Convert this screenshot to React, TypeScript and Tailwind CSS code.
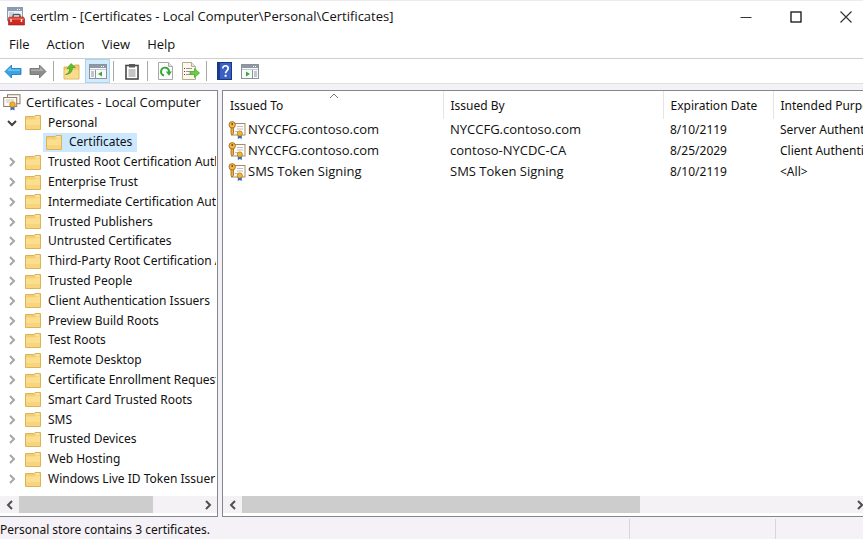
import React from 'react';

const stores = [
  'Trusted Root Certification Authorities',
  'Enterprise Trust',
  'Intermediate Certification Authorities',
  'Trusted Publishers',
  'Untrusted Certificates',
  'Third-Party Root Certification Authorities',
  'Trusted People',
  'Client Authentication Issuers',
  'Preview Build Roots',
  'Test Roots',
  'Remote Desktop',
  'Certificate Enrollment Requests',
  'Smart Card Trusted Roots',
  'SMS',
  'Trusted Devices',
  'Web Hosting',
  'Windows Live ID Token Issuer',
];

const certificates = [
  { to: 'NYCCFG.contoso.com', by: 'NYCCFG.contoso.com', expires: '8/10/2119', purpose: 'Server Authentication' },
  { to: 'NYCCFG.contoso.com', by: 'contoso-NYCDC-CA', expires: '8/25/2029', purpose: 'Client Authentication' },
  { to: 'SMS Token Signing', by: 'SMS Token Signing', expires: '8/10/2119', purpose: '<All>' },
];

function AppIcon() {
  return (
    <svg width="18" height="19" viewBox="0 0 18 19" className="shrink-0">
      <rect x="0.5" y="0.5" width="15" height="13" fill="#eef2f6" stroke="#8d9bad" />
      <rect x="1" y="1" width="14" height="3" fill="#8b9db5" />
      <path d="M10 2.500h1M12 2.500h1" stroke="#fff" />
      <path d="M2 6h5M2 8h3" stroke="#a9b4c2" />
      <path d="M6 10V8.500Q6 7.500 7 7.500h5q1 0 1 1V10" fill="none" stroke="#55585f" strokeWidth="1.500" />
      <path d="M2 10h14.500l1 2v6H1.500v-6z" fill="#cf2a22" stroke="#8f1712" strokeWidth="0.600" />
      <path d="M2 10.500h14.500l0.700 2.500H1.800z" fill="#e5584c" />
      <path d="M4 12v3M14.500 12v3" stroke="#f5e6e0" strokeWidth="1.500" />
    </svg>
  );
}

function ArrowIcon({ fill, stroke, flip }: { fill: string; stroke: string; flip?: boolean }) {
  return (
    <svg width="18" height="16" viewBox="0 0 18 16">
      <path
        d={flip ? 'M17 8.500L10.500 2V5.500H1v6h9.500V15z' : 'M1 8.500L7.500 2V5.500H17v6H7.500V15z'}
        fill={fill}
        stroke={stroke}
        strokeWidth="0.800"
        strokeLinejoin="round"
      />
      <path d={flip ? 'M2 6.500h9V4l4 4H2z' : 'M16 6.500H7V4L3 8h13z'} fill="#fff" opacity="0.300" />
    </svg>
  );
}

function UpFolderIcon() {
  return (
    <svg width="17" height="18" viewBox="0 0 17 18">
      <path d="M1 5h9l1.500-2H16v14H1z" fill="#f4cf73" stroke="#d5a640" strokeWidth="0.800" />
      <path d="M1.500 8h14v8.500h-14z" fill="#f9dc8c" />
      <path d="M2.500 12.500C5.500 11.500 6.500 9.500 6.500 6.500H4L8 1.500l4.500 4H9.500C9.500 10 7 12.500 2.500 12.500z" fill="#5cc02c" stroke="#3a8d1c" strokeWidth="0.500" />
    </svg>
  );
}

function PaneIcon({ left }: { left?: boolean }) {
  return (
    <svg width="18" height="15" viewBox="0 0 18 15">
      <rect x="0.500" y="0.500" width="17" height="14" fill="#f8f9fa" stroke="#8a929c" />
      <rect x="1" y="1" width="16" height="3" fill="#8f99a6" />
      <path d="M12 2.500h1M14 2.500h1" stroke="#fff" />
      <path d="M1 5.500h16" stroke="#c5cbd2" />
      {left ? (
        <>
          <path d="M6.500 6v8.500" stroke="#8a929c" />
          <path d="M2 8h3M2 10h3M2 12h3" stroke="#8a929c" />
          <path d="M13 7.500v5L9 10z" fill="#3fa63b" />
        </>
      ) : (
        <>
          <path d="M11.500 6v8.500" stroke="#8a929c" />
          <path d="M13 8h3M13 10h3M13 12h3" stroke="#8a929c" />
          <path d="M5 7.500v5l4-2.500z" fill="#3fa63b" />
        </>
      )}
    </svg>
  );
}

function ClipboardIcon() {
  return (
    <svg width="14" height="17" viewBox="0 0 14 17">
      <rect x="1" y="2.500" width="12" height="13.500" fill="#fff" stroke="#474747" strokeWidth="1.600" />
      <path d="M4 1h6v3.500H4z" fill="#5a5a5a" />
      <path d="M3.500 7h7M3.500 9h7M3.500 11h7M3.500 13h7" stroke="#8a8a8a" />
    </svg>
  );
}

function RefreshIcon() {
  return (
    <svg width="15" height="18" viewBox="0 0 15 18">
      <path d="M0.500 0.500h10l4 4v13h-14z" fill="#fcfcfc" stroke="#a9a9a9" />
      <path d="M10.500 0.500v4h4" fill="#e5e5e5" stroke="#a9a9a9" />
      <path d="M6 13.500A4 4 0 1 1 11 10" fill="none" stroke="#35a937" strokeWidth="2" />
      <path d="M7.800 9.500h6L11 13.800z" fill="#35a937" />
    </svg>
  );
}

function ExportIcon() {
  return (
    <svg width="18" height="18" viewBox="0 0 18 18">
      <path d="M0.500 0.500h9l4 4v13h-13z" fill="#fdf9ea" stroke="#b3aa90" />
      <path d="M9.500 0.500v4h4" fill="#e5e5e5" stroke="#b3aa90" />
      <path d="M2 6.500h1M2 9.500h1M2 12.500h1" stroke="#444" />
      <path d="M4 6.500h6M4 9.500h4M4 12.500h4" stroke="#a08d9d" />
      <path d="M8 9.500h4.500V6.500l5 4.500-5 4.500v-3H8z" fill="#6ad040" stroke="#3c9c2a" strokeWidth="0.700" />
    </svg>
  );
}

function HelpIcon() {
  return (
    <svg width="15" height="18" viewBox="0 0 15 18">
      <rect x="0.500" y="0.500" width="14" height="17" fill="#3a60c4" stroke="#1c3582" />
      <path d="M2 1v16" stroke="#1d3a90" strokeWidth="2" />
      <path d="M5.800 6.500c0-3.800 5.400-3.400 5.400-.2 0 2.200-2.600 2.400-2.600 5" fill="none" stroke="#fff" strokeWidth="1.700" />
      <rect x="7.600" y="12.800" width="2" height="2" fill="#fff" />
    </svg>
  );
}

function FolderIcon() {
  return (
    <svg width="16" height="15" viewBox="0 0 16 15" className="shrink-0">
      <path d="M0.500 1.500h8.500l1-1h5.500v14H0.500z" fill="#f3cf73" stroke="#dcb359" />
      <path d="M10.500 2h4" stroke="#fff6d9" />
      <path d="M1 4.500h8.500l1.500-1h4V14H1z" fill="#fbdf8f" />
      <path d="M1 10h14v4H1z" fill="#f8d57c" />
    </svg>
  );
}

function StoreIcon() {
  return (
    <svg width="18" height="17" viewBox="0 0 18 17" className="shrink-0">
      <rect x="4.500" y="0.700" width="12.500" height="9" fill="#fdfaf0" stroke="#8d7a68" />
      <rect x="0.700" y="3.500" width="13" height="9" fill="#fffdf5" stroke="#8d7a68" />
      <path d="M3 6h8M3 8h4" stroke="#c9c1b4" />
      <path d="M7.500 11.500v5l2-1 2 1v-5z" fill="#3a6cc0" />
      <circle cx="9.500" cy="10.500" r="2.800" fill="#edb12d" stroke="#b57b10" strokeWidth="0.700" />
    </svg>
  );
}

function CertificateIcon() {
  return (
    <svg width="18" height="18" viewBox="0 0 18 18" className="shrink-0">
      <rect x="3.500" y="2.500" width="13.500" height="11.500" fill="#fffcf3" stroke="#a08b75" />
      <path d="M9 5.500h6M9 8h6M7 10.500h3" stroke="#c0bccb" />
      <path d="M3 6h2.500v6.500L4.200 14 3 12.500z" fill="#f0ae3c" stroke="#9c6414" strokeWidth="0.800" />
      <circle cx="4.200" cy="3.800" r="3.200" fill="#f5b748" stroke="#9c6414" strokeWidth="0.800" />
      <circle cx="4.200" cy="3" r="0.900" fill="#704508" />
      <path d="M9.800 13v5l2-1 2 1v-5z" fill="#3469c4" />
      <circle cx="11.800" cy="12.500" r="2.600" fill="#f0b52d" stroke="#a97414" strokeWidth="0.700" />
    </svg>
  );
}

function Chevron({ d, className }: { d: string; className: string }) {
  return (
    <svg width="10" height="10" viewBox="0 0 10 10" fill="none" stroke="currentColor" strokeWidth="2" className={className}>
      <path d={d} />
    </svg>
  );
}
const RIGHT = 'M3 1l4 4-4 4';
const LEFT = 'M7 1L3 5l4 4';
const DOWN = 'M1 3l4 4 4-4';

function ToolButton({ label, className, active, children }: { label: string; className: string; active?: boolean; children: React.ReactNode }) {
  return (
    <button
      type="button"
      aria-label={label}
      aria-pressed={active}
      className={`flex h-6 items-center justify-center ${className} ${active ? 'border border-[#a8d5f5] bg-[#d3eafb]' : ''}`}
    >
      {children}
    </button>
  );
}

function Divider({ className }: { className: string }) {
  return <span className={`h-5 w-px bg-[#a8a8a8] ${className}`} />;
}

function ScrollBar({ thumb }: { thumb: string }) {
  return (
    <div className="flex h-[17px] shrink-0 items-center bg-[#f5f2f6] text-[#505050]">
      <button type="button" aria-label="Scroll left" className="flex w-[19px] shrink-0 justify-center">
        <Chevron d={LEFT} className="" />
      </button>
      <div className="h-full flex-1">
        <div className={`h-full bg-[#cdcdcd] ${thumb}`} />
      </div>
      <button type="button" aria-label="Scroll right" className="flex w-[19px] shrink-0 justify-center">
        <Chevron d={RIGHT} className="" />
      </button>
    </div>
  );
}

export default function App() {
  return (
    <div className="flex h-screen flex-col overflow-hidden bg-[#f5f2f7] font-['Noto_Sans','Open_Sans',sans-serif] text-xs text-[#111]">
      <header className="flex h-8 shrink-0 items-center border-t border-[#ececec] bg-white pl-[7px]">
        <AppIcon />
        <h1 className="ml-[5px] flex-1 truncate font-['Open_Sans',sans-serif] text-[13px]">certlm - [Certificates - Local Computer\Personal\Certificates]</h1>
        <button type="button" aria-label="Minimize" className="flex h-full w-[50px] items-center justify-center">
          <svg width="12" height="12" viewBox="0 0 12 12"><path d="M0.500 6.500h11" stroke="#333" /></svg>
        </button>
        <button type="button" aria-label="Maximize" className="flex h-full w-[50px] items-center justify-center">
          <svg width="12" height="12" viewBox="0 0 12 12"><rect x="1" y="1" width="10" height="10" fill="none" stroke="#111" strokeWidth="1.300" /></svg>
        </button>
        <button type="button" aria-label="Close" className="flex h-full w-[42px] items-center justify-center pl-2">
          <svg width="12" height="12" viewBox="0 0 12 12"><path d="M0.500 0.500l11 11M11.500 0.500l-11 11" stroke="#333" strokeWidth="1.200" /></svg>
        </button>
      </header>

      <nav className="flex h-[27px] shrink-0 items-center gap-[17px] border-b border-[#cfcfcf] bg-white pl-[9px] font-['Open_Sans',sans-serif] text-[13px]">
        <button type="button">File</button>
        <button type="button">Action</button>
        <button type="button">View</button>
        <button type="button">Help</button>
      </nav>

      <div className="flex h-[25px] shrink-0 items-center border-b border-[#dfdfdf] bg-white pl-[3px]">
        <ToolButton label="Back" className="w-[19px]"><ArrowIcon fill="#35a5e6" stroke="#1b74b8" /></ToolButton>
        <ToolButton label="Forward" className="ml-[6px] w-[19px]"><ArrowIcon fill="#8c8c8c" stroke="#6b6b6b" flip /></ToolButton>
        <Divider className="ml-[6px]" />
        <ToolButton label="Up one level" className="ml-[5px] w-[25px]"><UpFolderIcon /></ToolButton>
        <ToolButton label="Show console tree" className="ml-px w-[25px]" active><PaneIcon left /></ToolButton>
        <Divider className="ml-[3px]" />
        <ToolButton label="Copy" className="ml-[5px] w-[25px]"><ClipboardIcon /></ToolButton>
        <Divider className="ml-[3px]" />
        <ToolButton label="Refresh" className="ml-[5px] w-[25px]"><RefreshIcon /></ToolButton>
        <ToolButton label="Export list" className="w-[25px]"><ExportIcon /></ToolButton>
        <Divider className="ml-[3px]" />
        <ToolButton label="Help topics" className="ml-[5px] w-[25px]"><HelpIcon /></ToolButton>
        <ToolButton label="Show action pane" className="w-[25px]"><PaneIcon /></ToolButton>
      </div>

      <main className="mt-[6px] flex min-h-0 flex-1 gap-1">
        <section aria-label="Console tree" className="flex w-[218px] shrink-0 flex-col border-y border-r border-[#828790] bg-white pb-[3px]">
          <ul className="mr-px flex min-h-0 flex-1 flex-col overflow-hidden whitespace-nowrap pt-0.5 pb-[7px]">
            <li className="flex min-h-0 flex-1 items-center pl-[3px]">
              <StoreIcon />
              <span className="ml-[5px] font-['Open_Sans',sans-serif] text-[13px]">Certificates - Local Computer</span>
            </li>
            <li className="flex min-h-0 flex-1 items-center pl-[7px]">
              <Chevron d={DOWN} className="shrink-0 text-[#404040]" />
              <span className="ml-2 flex items-center gap-[7px]"><FolderIcon />Personal</span>
            </li>
            <li className="flex min-h-0 flex-1 items-stretch pl-[43px]">
              <span className="flex items-center gap-[7px] bg-[#cce8ff] pl-[3px] pr-[5px]"><FolderIcon />Certificates</span>
            </li>
            {stores.map((name) => (
              <li key={name} className="flex min-h-0 flex-1 items-center pl-[7px]">
                <Chevron d={RIGHT} className="shrink-0 text-[#a6a6a6]" />
                <span className="ml-2 flex items-center gap-[7px]"><FolderIcon />{name}</span>
              </li>
            ))}
          </ul>
          <ScrollBar thumb="w-3/4" />
        </section>

        <section aria-label="Certificates" className="flex min-w-0 flex-1 flex-col border-y border-l border-[#828790] bg-white pb-[3px]">
          <div className="min-h-0 flex-1 overflow-hidden">
            <table className="w-full min-w-[750px] table-fixed whitespace-nowrap text-left">
              <colgroup>
                <col className="w-[220px]" />
                <col className="w-[220px]" />
                <col className="w-[110px]" />
                <col />
              </colgroup>
              <thead>
                <tr className="h-7">
                  <th className="relative border-r border-[#e5e5e5] pl-[7px] pt-0.5 font-normal">
                    Issued To
                    <svg width="10" height="6" viewBox="0 0 10 6" className="absolute left-[106px] top-0.5" fill="none" stroke="#777">
                      <path d="M1 5l4-4 4 4" />
                    </svg>
                  </th>
                  <th className="border-r border-[#e5e5e5] pl-[7px] pt-0.5 font-normal">Issued By</th>
                  <th className="border-r border-[#e5e5e5] pl-[7px] pt-0.5 font-normal">Expiration Date</th>
                  <th className="pl-[7px] pt-0.5 font-normal">Intended Purposes</th>
                </tr>
              </thead>
              <tbody>
                {certificates.map((c, i) => (
                  <tr key={i} className="h-[21px]">
                    <td className="pl-[5px] font-['Open_Sans',sans-serif] text-[13px]"><span className="flex items-center gap-[2px]"><CertificateIcon />{c.to}</span></td>
                    <td className="pl-[7px] font-['Open_Sans',sans-serif] text-[13px]">{c.by}</td>
                    <td className="pl-[7px]">{c.expires}</td>
                    <td className="pl-[7px]">{c.purpose}</td>
                  </tr>
                ))}
              </tbody>
            </table>
          </div>
          <div className="-mr-1.5">
            <ScrollBar thumb="w-[65.5%]" />
          </div>
        </section>
      </main>

      <footer className="flex h-[22px] shrink-0 items-stretch">
        <p className="flex flex-1 items-center pt-1">Personal store contains 3 certificates.</p>
        <span className="mt-0.5 w-[146px] border-l border-[#d9d6da]" />
        <span className="mt-0.5 w-[88px] border-l border-[#d9d6da]" />
      </footer>
    </div>
  );
}
